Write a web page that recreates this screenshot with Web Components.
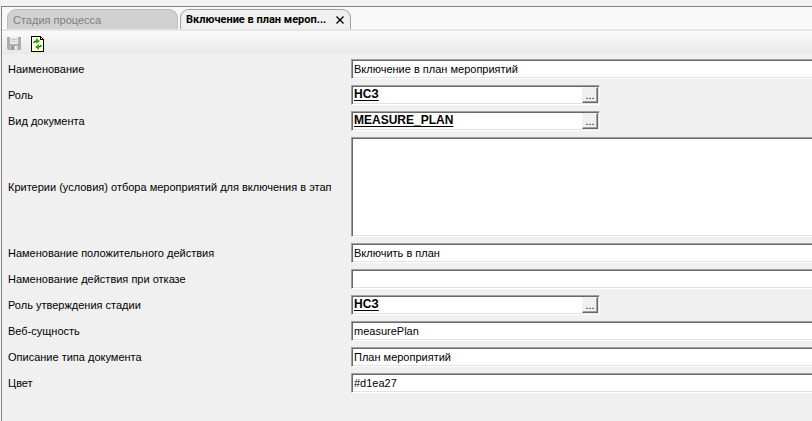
<!DOCTYPE html>
<html lang="ru">
<head>
<meta charset="utf-8">
<title>Включение в план мероприятий</title>
<style>
  html, body { height: 100%; }
  body {
    margin: 0;
    overflow: hidden;
    background: #f3f3f3;
    color: #000;
    font: 11px/14px "Liberation Sans", Arial, sans-serif;
  }
</style>
</head>
<body>
<stage-window>
  <tab-strip slot="tabs">
    <doc-tab>Стадия процесса</doc-tab>
    <doc-tab active>Включение в план мероп...</doc-tab>
  </tab-strip>
  <tool-bar slot="toolbar"></tool-bar>
  <text-field label="Наименование" value="Включение в план мероприятий"></text-field>
  <lookup-field label="Роль" value="НСЗ"></lookup-field>
  <lookup-field label="Вид документа" value="MEASURE_PLAN"></lookup-field>
  <memo-field label="Критерии (условия) отбора мероприятий для включения в этап"></memo-field>
  <text-field label="Наменование положительного действия" value="Включить в план"></text-field>
  <text-field label="Наменование действия при отказе" value=""></text-field>
  <lookup-field label="Роль утверждения стадии" value="НСЗ"></lookup-field>
  <text-field label="Веб-сущность" value="measurePlan"></text-field>
  <text-field label="Описание типа документа" value="План мероприятий"></text-field>
  <text-field label="Цвет" value="#d1ea27"></text-field>
</stage-window>

<script>
  function define(name, render) {
    customElements.define(name, class extends HTMLElement {
      constructor() {
        super();
        this.attachShadow({ mode: 'open' });
      }
      connectedCallback() {
        this.shadowRoot.innerHTML = render(this);
      }
    });
  }

  const rowStyle = `
    * { box-sizing: border-box; }
    :host {
      display: grid;
      grid-template-columns: 343px minmax(0, 1fr);
      align-items: center;
    }
    label { white-space: nowrap; }
    input, textarea, button { font: inherit; color: inherit; margin: 0; border-radius: 0; outline: 0; }
    .sunken {
      display: block;
      width: 100%;
      height: 20px;
      border: 1px solid;
      border-color: #a0a0a0 #fff #fff #a0a0a0;
      box-shadow: inset 1px 1px #696969, inset -1px -1px #e3e3e3;
      background: #fff;
    }
    .open { border-right: 0; box-shadow: inset 1px 1px #696969, inset 0 -1px #e3e3e3; }
  `;

  define('stage-window', () => `
    <style>
      * { box-sizing: border-box; }
      :host { display: block; height: 100%; padding: 6px 0 0 1px; box-sizing: border-box; }
      main {
        display: flex;
        flex-direction: column;
        height: 100%;
        border-top: 1px solid #828282;
        border-left: 1px solid #828282;
        background: #f0f0f0;
      }
      form { display: flex; flex-direction: column; gap: 6px; padding: 4px 0 0 6px; }
    </style>
    <main>
      <slot name="tabs"></slot>
      <slot name="toolbar"></slot>
      <form><slot></slot></form>
    </main>`);

  define('tab-strip', () => `
    <style>
      :host {
        display: flex;
        gap: 2px;
        padding: 2px 0 0 5px;
        background: linear-gradient(#fff, #fff) 0 100% / 100% 1px no-repeat, #f8f8f8;
      }
    </style>
    <slot></slot>`);

  define('doc-tab', host => `
    <style>
      * { box-sizing: border-box; }
      :host {
        display: flex;
        align-items: center;
        width: 171px;
        height: 20px;
        box-sizing: border-box;
        padding: 0 5px;
        border: 1px solid #bcbcbc;
        border-bottom: 0;
        border-radius: 9px 9px 0 0;
        background: #d1d1d1;
        color: #808080;
      }
      :host([active]) {
        border-color: #a0a0a0;
        background: #f0f0f0;
        color: #000;
        font-family: Roboto, "Liberation Sans", sans-serif;
        font-weight: bold;
      }
      .title {
        padding: 0;
        border: 0;
        background: none;
        color: inherit;
        font: inherit;
        text-align: left;
        white-space: nowrap;
      }
      .close { display: flex; margin-left: auto; padding: 1px; border: 0; background: none; }
    </style>
    <button type="button" class="title"><slot></slot></button>
    ${host.hasAttribute('active') ? `
    <button type="button" class="close" aria-label="Закрыть">
      <svg width="8" height="8" viewBox="0 0 8 8"><path d="M.5.5l7 7M7.5.5l-7 7" stroke="#000" stroke-width="1.4"/></svg>
    </button>` : ''}`);

  define('tool-bar', () => `
    <style>
      :host {
        display: flex;
        align-items: center;
        gap: 8px;
        height: 26px;
        box-sizing: border-box;
        padding: 1px 0 0 5px;
        border-top: 2px solid #e6e6e6;
        background: linear-gradient(#fbfbfb, #e8e8e8 23px, #f0f0f0 23px);
        background-clip: padding-box;
      }
      button { display: flex; padding: 0; border: 0; background: none; }
      svg { display: block; }
    </style>
    <button type="button" disabled aria-label="Сохранить">
      <svg width="16" height="16" viewBox="0 0 16 16" shape-rendering="crispEdges">
        <path d="M0 1h14v13H1l-1-1z" fill="#adadad"/>
        <path d="M3 1h8v7H3z" fill="#ececec"/>
        <path d="M4 3h6v1H4zM4 5h6v1H4z" fill="#c8c8c8"/>
        <path d="M3 10h8v4H3z" fill="#c8c8c8"/>
        <path d="M4 10h3v4H4z" fill="#999"/>
        <path d="M8 10h2v3H8z" fill="#eee"/>
      </svg>
    </button>
    <button type="button" aria-label="Обновить">
      <svg width="13" height="16" viewBox="0 0 13 16">
        <g shape-rendering="crispEdges">
          <path d="M0 0h10v1h1v1h1v1h1v13H0z" fill="#000"/>
          <path d="M1 1h8v3h3v11H1z" fill="#ffffdf"/>
          <path d="M10 2h1v1h-1z" fill="#fff"/>
        </g>
        <path d="M3 7q0-2 3-2" fill="none" stroke="#167a50" stroke-width="1.6"/>
        <path d="M5 2l4 3-4 3z" fill="#3f9b12"/>
        <path d="M10 9q0 2-3 2" fill="none" stroke="#167a50" stroke-width="1.6"/>
        <path d="M8 8l-4 3 4 3z" fill="#3f9b12"/>
      </svg>
    </button>`);

  define('text-field', host => `
    <style>${rowStyle}
      input { padding: 0 1px 0 2px; }
    </style>
    <label for="f">${host.getAttribute('label')}</label>
    <input id="f" type="text" class="sunken open" value="${host.getAttribute('value')}">`);

  define('memo-field', host => `
    <style>${rowStyle}
      textarea.sunken { height: 100px; padding: 2px; resize: none; }
    </style>
    <label for="f">${host.getAttribute('label')}</label>
    <textarea id="f" class="sunken open"></textarea>`);

  define('lookup-field', host => `
    <style>${rowStyle}
      .box { display: flex; align-items: stretch; width: 249px; padding: 1px; }
      input {
        flex: 1;
        min-width: 0;
        padding: 0 0 2px 1px;
        border: 0;
        background: none;
        font-size: 12px;
        font-weight: bold;
        text-decoration: underline;
        text-underline-offset: 2px;
      }
      button {
        width: 16px;
        padding: 0;
        border: 1px solid;
        border-color: #f0f0f0 #696969 #696969 #f0f0f0;
        background: #f0f0f0;
        box-shadow: inset -1px -1px #a0a0a0;
        line-height: 14px;
      }
    </style>
    <label for="f">${host.getAttribute('label')}</label>
    <div class="box sunken">
      <input id="f" type="text" value="${host.getAttribute('value')}">
      <button type="button" aria-label="Выбрать">...</button>
    </div>`);
</script>
</body>
</html>
